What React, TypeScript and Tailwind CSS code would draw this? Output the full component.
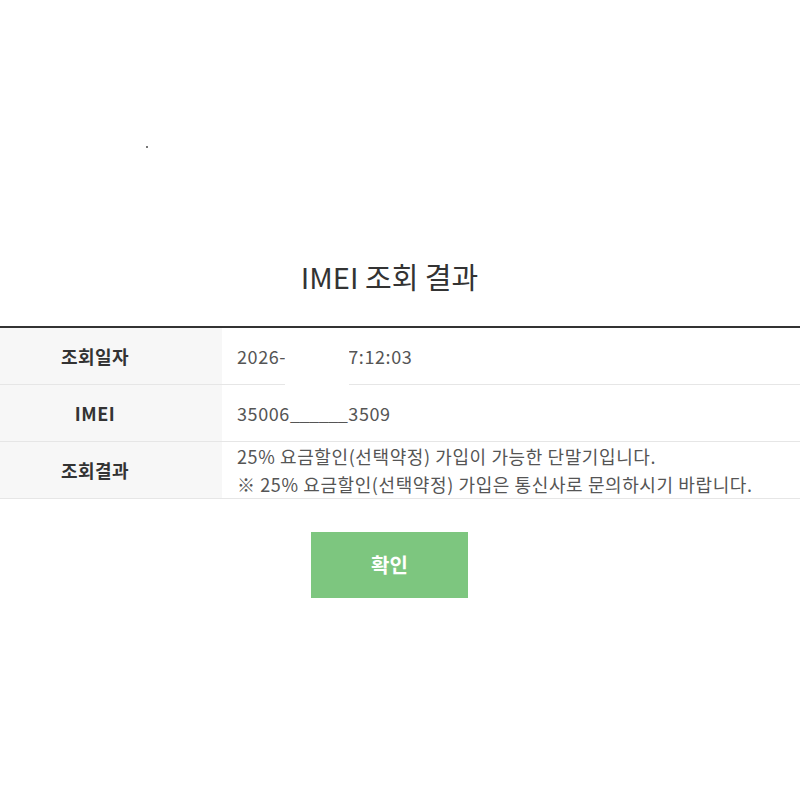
import React from "react";

const font = { fontFamily: '"Noto Sans CJK KR", "Noto Sans", sans-serif' };

function Row({ label, children }: { label: string; children: React.ReactNode }) {
  return (
    <div className="flex border-b border-[#e6e6e6]">
      <div className="w-[222px] shrink-0 bg-[#f7f7f7] flex items-center justify-center pr-[32px] text-[18px] tracking-[0.5px] font-bold text-[#333]">
        {label}
      </div>
      <div className="flex-1 min-h-[56px] flex flex-col justify-center pl-[15px] text-[18px] tracking-[0.6px] leading-[28px] text-[#555]">
        {children}
      </div>
    </div>
  );
}

export default function App() {
  return (
    <div className="w-[800px] h-[800px] bg-white overflow-hidden" style={font}>
      <div className="h-[146px]" />
      <div className="ml-[146px] w-[2px] h-[2px] bg-[#777]" />
      <div className="h-[108px]" />
      <div className="w-[779px] flex justify-center">
        <h1 className="text-[29px] leading-[40px] text-[#333]">IMEI 조회 결과</h1>
      </div>
      <div className="h-[30px]" />
      <div className="relative border-t-2 border-[#333]">
        <Row label="조회일자">
          <span>
            2026-<span className="inline-block w-[62px]" />7:12:03
          </span>
        </Row>
        <Row label="IMEI">
          <span>
            35006<span className="tracking-[-0.5px]">______</span>
            <span className="ml-[1px]">3509</span>
          </span>
        </Row>
        <Row label="조회결과">
          <span>25% 요금할인(선택약정) 가입이 가능한 단말기입니다.</span>
          <span>※ 25% 요금할인(선택약정) 가입은 통신사로 문의하시기 바랍니다.</span>
        </Row>
        <div className="absolute left-[285px] top-[4px] w-[64px] h-[56px] bg-white" />
      </div>
      <div className="h-[33px]" />
      <div className="w-[779px] flex justify-center">
        <button className="w-[157px] h-[66px] bg-[#7dc67f] text-white text-[20px] font-bold">
          확인
        </button>
      </div>
    </div>
  );
}
